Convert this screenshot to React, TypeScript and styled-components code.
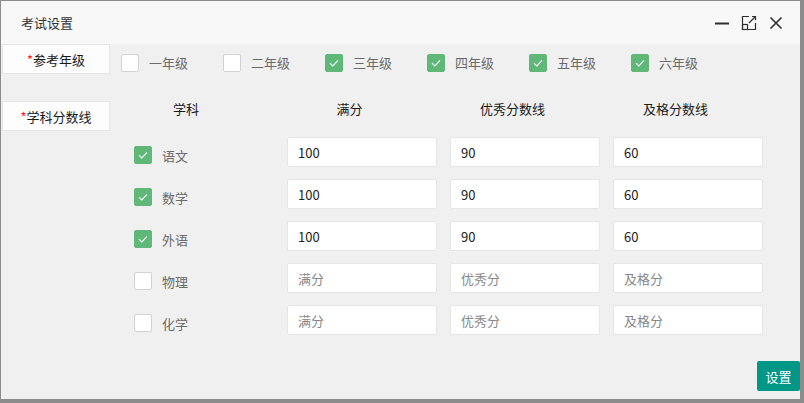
import React, { useState } from 'react';
import styled, { createGlobalStyle } from 'styled-components';

const GlobalStyle = createGlobalStyle`
  html, body {
    margin: 0;
    padding: 0;
    background: #8c8c8c;
    font-family: "Noto Sans CJK SC", "Liberation Sans", sans-serif;
  }
  * { box-sizing: border-box; }
`;

const Dialog = styled.div`
  margin: 1px 0 0 1px;
  width: 799px;
  height: 398px;
  background: #f0f0f0;
  display: flex;
  flex-direction: column;
`;

const TitleBar = styled.div`
  height: 43px;
  flex: none;
  background: #f8f8f8;
  display: flex;
  align-items: center;
  justify-content: space-between;
  padding: 0 16px 0 20px;
`;

const Title = styled.div`
  font-size: 13px;
  color: #333;
`;

const WinButtons = styled.div`
  display: flex;
  align-items: center;
  gap: 11px;
  color: #2f2f2f;
  svg { display: block; }
`;

const Body = styled.div`
  flex: 1;
  padding: 0 0 0 1px;
`;

const FieldRow = styled.div<{ $top?: number }>`
  display: flex;
  align-items: flex-start;
  margin-top: ${(p) => p.$top ?? 0}px;
`;

const FieldLabel = styled.div`
  width: 108px;
  height: 30px;
  flex: none;
  background: #fdfdfd;
  border: 1px solid #e6e6e6;
  display: flex;
  align-items: center;
  justify-content: center;
  font-size: 13px;
  color: #1a1a1a;

  em {
    color: #ff2020;
    font-style: normal;
  }
`;

const GradeList = styled.div`
  display: flex;
  margin-left: 11px;
  padding-top: 9px;
`;

const GradeItem = styled.label`
  width: 102px;
  display: flex;
  align-items: center;
  gap: 10px;
  font-size: 13px;
  color: #6a6a6a;
  cursor: pointer;
`;

const Check = styled.span<{ $on: boolean }>`
  width: 18px;
  height: 18px;
  flex: none;
  border-radius: 2px;
  border: 1px solid ${(p) => (p.$on ? '#5fb878' : '#d2d2d2')};
  background: ${(p) => (p.$on ? '#5fb878' : '#fff')};
  display: flex;
  align-items: center;
  justify-content: center;
`;

const Table = styled.div`
  display: flex;
  flex-direction: column;
  gap: 12px;
`;

const Columns = styled.div`
  display: grid;
  grid-template-columns: 158px 163px 163px 163px;
`;

const HeadRow = styled(Columns)`
  height: 16px;
  margin-bottom: 8px;
`;

const ScoreRow = styled(Columns)`
  height: 30px;
`;

const HeadCell = styled.div<{ $first?: boolean }>`
  line-height: 16px;
  text-align: center;
  padding-right: ${(p) => (p.$first ? 6 : 0)}px;
  font-size: 13px;
  color: #1a1a1a;
`;

const SubjectCell = styled.label`
  display: flex;
  align-items: center;
  gap: 10px;
  padding: 6px 0 0 24px;
  font-size: 13px;
  color: #6a6a6a;
  cursor: pointer;
`;

const InputCell = styled.div`
  padding-left: 19px;
`;

const ScoreInput = styled.input`
  width: 150px;
  height: 30px;
  border: 1px solid #e6e6e6;
  border-radius: 2px;
  background: #fff;
  padding: 0 10px;
  font-family: inherit;
  font-size: 13px;
  color: #222;
  outline: none;

  &::placeholder {
    color: #888;
  }

  &:focus {
    border-color: #c9c9c9;
  }
`;

const Footer = styled.div`
  display: flex;
  justify-content: flex-end;
  padding-bottom: 8px;
`;

const Button = styled.button`
  height: 30px;
  width: 43px;
  padding: 0;
  border: 0 none;
  border-radius: 2px;
  background: #009688;
  color: #fff;
  font-family: inherit;
  font-size: 13px;
  cursor: pointer;
`;

const Tick = () => (
  <svg width="12" height="12" viewBox="0 0 12 12">
    <path d="M2 6.2 L4.8 9 L10 3.4" fill="none" stroke="#fff" strokeWidth="1.1" />
  </svg>
);

const Box: React.FC<{ on: boolean }> = ({ on }) => (
  <Check $on={on}>{on && <Tick />}</Check>
);

const grades = ['一年级', '二年级', '三年级', '四年级', '五年级', '六年级'];

type Subject = { name: string; on: boolean; full: string; good: string; pass: string };

const initialSubjects: Subject[] = [
  { name: '语文', on: true, full: '100', good: '90', pass: '60' },
  { name: '数学', on: true, full: '100', good: '90', pass: '60' },
  { name: '外语', on: true, full: '100', good: '90', pass: '60' },
  { name: '物理', on: false, full: '', good: '', pass: '' },
  { name: '化学', on: false, full: '', good: '', pass: '' },
];

export default function App() {
  const [picked, setPicked] = useState<boolean[]>([false, false, true, true, true, true]);
  const [subjects, setSubjects] = useState<Subject[]>(initialSubjects);

  const toggleGrade = (i: number) =>
    setPicked((p) => p.map((v, j) => (j === i ? !v : v)));

  const update = (i: number, patch: Partial<Subject>) =>
    setSubjects((s) => s.map((v, j) => (j === i ? { ...v, ...patch } : v)));

  return (
    <>
      <GlobalStyle />
      <Dialog>
        <TitleBar>
          <Title>考试设置</Title>
          <WinButtons>
            <svg width="16" height="16" viewBox="0 0 16 16">
              <path d="M1 8.5 H15" stroke="currentColor" strokeWidth="2" />
            </svg>
            <svg width="16" height="16" viewBox="0 0 16 16">
              <path d="M8 1.5 H1.5 V14.5 H14.5 V8" fill="none" stroke="currentColor" strokeWidth="1.2" />
              <path d="M11 1.5 H14.5 V5" fill="none" stroke="currentColor" strokeWidth="1.2" />
              <rect x="1.5" y="9.5" width="5" height="5" fill="none" stroke="currentColor" strokeWidth="1.2" />
              <path d="M8 8 L14 2" fill="none" stroke="currentColor" strokeWidth="1.2" />
            </svg>
            <svg width="16" height="16" viewBox="0 0 16 16">
              <path d="M2.5 2.5 L13.5 13.5 M13.5 2.5 L2.5 13.5" stroke="currentColor" strokeWidth="1.6" />
            </svg>
          </WinButtons>
        </TitleBar>
        <Body>
          <FieldRow>
            <FieldLabel>
              <em>*</em>参考年级
            </FieldLabel>
            <GradeList>
              {grades.map((g, i) => (
                <GradeItem key={g} onClick={() => toggleGrade(i)}>
                  <Box on={picked[i]} />
                  {g}
                </GradeItem>
              ))}
            </GradeList>
          </FieldRow>
          <FieldRow $top={27}>
            <FieldLabel>
              <em>*</em>学科分数线
            </FieldLabel>
            <Table>
              <HeadRow>
                <HeadCell $first>学科</HeadCell>
                <HeadCell>满分</HeadCell>
                <HeadCell>优秀分数线</HeadCell>
                <HeadCell>及格分数线</HeadCell>
              </HeadRow>
              {subjects.map((s, i) => (
                <ScoreRow key={s.name}>
                  <SubjectCell onClick={() => update(i, { on: !s.on })}>
                    <Box on={s.on} />
                    {s.name}
                  </SubjectCell>
                  <InputCell>
                    <ScoreInput
                      value={s.full}
                      placeholder="满分"
                      onChange={(e) => update(i, { full: e.target.value })}
                    />
                  </InputCell>
                  <InputCell>
                    <ScoreInput
                      value={s.good}
                      placeholder="优秀分"
                      onChange={(e) => update(i, { good: e.target.value })}
                    />
                  </InputCell>
                  <InputCell>
                    <ScoreInput
                      value={s.pass}
                      placeholder="及格分"
                      onChange={(e) => update(i, { pass: e.target.value })}
                    />
                  </InputCell>
                </ScoreRow>
              ))}
            </Table>
          </FieldRow>
        </Body>
        <Footer>
          <Button>设置</Button>
        </Footer>
      </Dialog>
    </>
  );
}
